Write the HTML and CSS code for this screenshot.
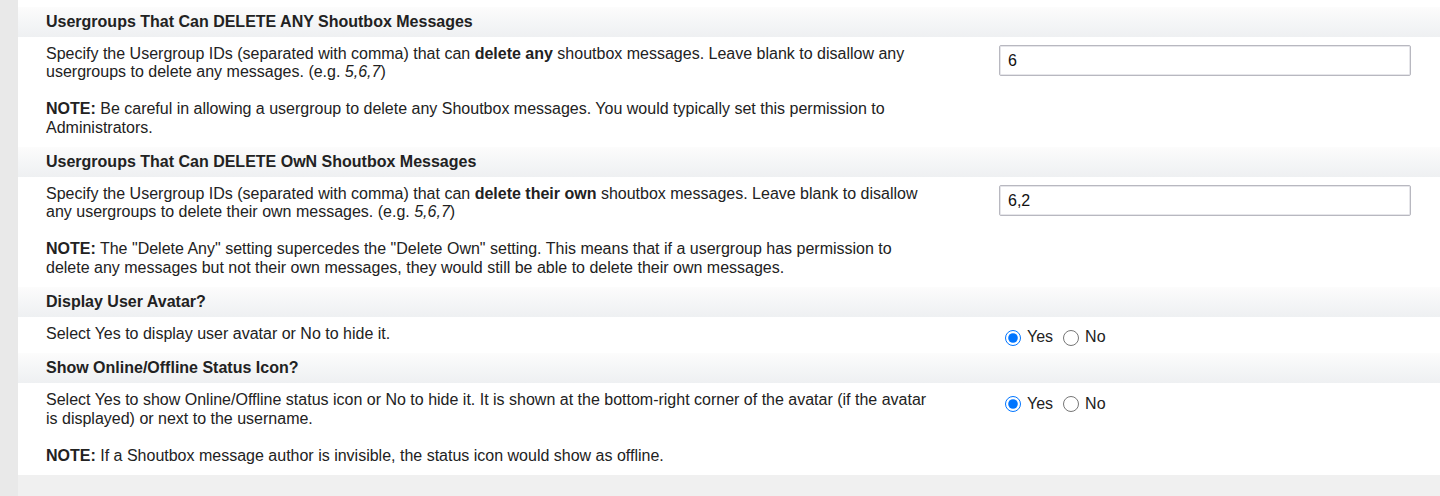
FILE: index.html
```html
<!DOCTYPE html>
<html>
<head>
<meta charset="utf-8">
<link rel="stylesheet" href="styles.css">
</head>
<body>
<div class="panel">
  <div class="settings">
    <div class="section-title">Usergroups That Can DELETE ANY Shoutbox Messages</div>
    <div class="row">
      <div class="desc">
        <p>Specify the Usergroup IDs (separated with comma) that can <b>delete any</b> shoutbox messages. Leave blank to disallow any usergroups to delete any messages. (e.g. <i>5,6,7</i>)</p>
        <p><b>NOTE:</b> Be careful in allowing a usergroup to delete any Shoutbox messages. You would typically set this permission to Administrators.</p>
      </div>
      <div class="control"><input class="text-input" type="text" value="6"></div>
    </div>

    <div class="section-title">Usergroups That Can DELETE OwN Shoutbox Messages</div>
    <div class="row">
      <div class="desc">
        <p>Specify the Usergroup IDs (separated with comma) that can <b>delete their own</b> shoutbox messages. Leave blank to disallow any usergroups to delete their own messages. (e.g. <i>5,6,7</i>)</p>
        <p><b>NOTE:</b> The "Delete Any" setting supercedes the "Delete Own" setting. This means that if a usergroup has permission to delete any messages but not their own messages, they would still be able to delete their own messages.</p>
      </div>
      <div class="control"><input class="text-input" type="text" value="6,2"></div>
    </div>

    <div class="section-title">Display User Avatar?</div>
    <div class="row">
      <div class="desc">
        <p>Select Yes to display user avatar or No to hide it.</p>
      </div>
      <div class="control radios">
        <label class="radio"><input type="radio" name="avatar" checked> Yes</label>
        <label class="radio"><input type="radio" name="avatar"> No</label>
      </div>
    </div>

    <div class="section-title">Show Online/Offline Status Icon?</div>
    <div class="row">
      <div class="desc">
        <p>Select Yes to show Online/Offline status icon or No to hide it. It is shown at the bottom-right corner of the avatar (if the avatar is displayed) or next to the username.</p>
        <p><b>NOTE:</b> If a Shoutbox message author is invisible, the status icon would show as offline.</p>
      </div>
      <div class="control radios">
        <label class="radio"><input type="radio" name="status" checked> Yes</label>
        <label class="radio"><input type="radio" name="status"> No</label>
      </div>
    </div>
  </div>
  <div class="footer-space"></div>
</div>
</body>
</html>
```

FILE: styles.css
```css
html, body {
  margin: 0;
  padding: 0;
}
body {
  background: #e9e9e9;
  font-family: "Liberation Sans", Arial, sans-serif;
  font-size: 16px;
  color: #222;
}
.panel {
  margin-left: 18px;
  background: #f0f0f0;
  min-height: 496px;
}
.settings {
  background: #fff;
  padding-top: 7px;
}
.section-title {
  height: 30px;
  display: flex;
  align-items: center;
  padding: 0 28px;
  font-weight: bold;
  font-size: 16px;
  color: #222;
  background: linear-gradient(to bottom, #fcfcfc 0%, #eef0f2 100%);
}
.row {
  display: grid;
  grid-template-columns: 886px 412px;
  column-gap: 67px;
  padding: 8px 29px 10px 28px;
  background: #fff;
}
.desc p {
  margin: 0 0 18.4px 0;
  line-height: 18.4px;
}
.desc p:last-child {
  margin-bottom: 0;
}
.text-input {
  box-sizing: border-box;
  width: 412px;
  height: 31px;
  border: 1px solid #b8b8c0;
  border-radius: 2px;
  padding: 0 8px;
  font-family: "Liberation Sans", Arial, sans-serif;
  font-size: 16px;
  color: #111;
  background: #fff;
  box-shadow: inset 0 0 0 1px #e6e6ea;
}
.radios {
  display: flex;
  align-items: center;
  height: 18.4px;
  margin-top: 3px;
  margin-bottom: -3px;
}
.radio {
  display: inline-flex;
  align-items: center;
  font-size: 16px;
  color: #222;
  margin-right: 4px;
}
.radio input {
  width: 16px;
  height: 16px;
  margin: 1px 6px 0 6px;
  accent-color: #0075ff;
}
.footer-space {
  height: 22px;
}
```
